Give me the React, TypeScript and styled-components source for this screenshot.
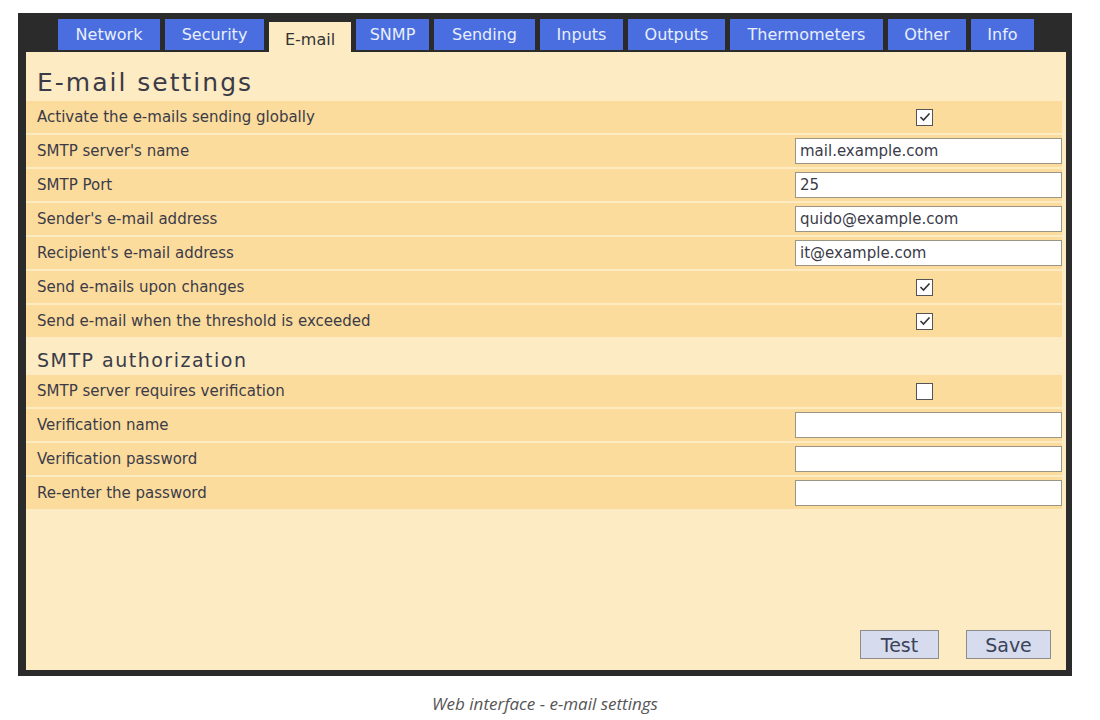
import React from "react";
import styled, { createGlobalStyle } from "styled-components";

const Global = createGlobalStyle`
  body { margin: 0; background: #fff; font-family: "DejaVu Sans", sans-serif; }
`;

const Page = styled.div`
  width: 1100px;
  height: 720px;
  padding: 13px 0 0 18px;
  box-sizing: border-box;
`;

const Frame = styled.div`
  width: 1054px;
  height: 663px;
  background: #2b2b2b;
  padding: 0 6px 6px 8px;
  box-sizing: border-box;
  display: flex;
  flex-direction: column;
`;

const TabBar = styled.div`
  display: flex;
  align-items: flex-end;
  gap: 5px;
  height: 39px;
  padding-left: 32px;
`;

const Tab = styled.div<{ $active?: boolean; $w: number }>`
  width: ${(p) => p.$w}px;
  height: ${(p) => (p.$active ? 30 : 31)}px;
  margin-bottom: ${(p) => (p.$active ? 0 : 2)}px;
  background: ${(p) => (p.$active ? "#fdebc3" : "#4a6ee0")};
  color: ${(p) => (p.$active ? "#333" : "#e8eefc")};
  font-size: 16px;
  display: flex;
  align-items: ${(p) => (p.$active ? "flex-end" : "center")};
  padding-bottom: ${(p) => (p.$active ? 3 : 0)}px;
  box-sizing: border-box;
  justify-content: center;
`;

const Panel = styled.div`
  flex: 1;
  background: #fdebc3;
  padding: 0 4px 0 0;
  display: flex;
  flex-direction: column;
  color: #3b3b48;
`;

const Heading = styled.h1<{ $small?: boolean }>`
  margin: 0;
  font-weight: normal;
  font-size: ${(p) => (p.$small ? 19 : 25)}px;
  letter-spacing: ${(p) => (p.$small ? 1.5 : 2)}px;
  height: ${(p) => (p.$small ? 36 : 49)}px;
  display: flex;
  align-items: flex-end;
  padding: 0 0 4px 11px;
  box-sizing: border-box;
`;

const Row = styled.div`
  height: 32px;
  margin-bottom: 2px;
  background: #fbdc9c;
  display: flex;
  align-items: center;
  font-size: 15px;
  padding-left: 11px;
`;

const Label = styled.div`
  flex: 1;
`;

const Control = styled.div`
  width: 267px;
  display: flex;
  justify-content: center;
  align-items: center;
`;

const TextInput = styled.div`
  width: 100%;
  height: 26px;
  background: #fff;
  border: 1px solid #9a9686;
  box-sizing: border-box;
  font-size: 15px;
  padding-left: 4px;
  display: flex;
  align-items: center;
`;

const Check = styled.div`
  width: 15px;
  height: 15px;
  margin-right: 8px;
  border: 1px solid #555;
  background: #fff;
  display: flex;
  align-items: center;
  justify-content: center;
`;

const Footer = styled.div`
  margin-top: auto;
  display: flex;
  justify-content: flex-end;
  gap: 27px;
  padding: 0 11px 11px 0;
`;

const Button = styled.div<{ $w: number }>`
  width: ${(p) => p.$w}px;
  height: 29px;
  background: #d6dcee;
  border: 1px solid #8c8c8c;
  box-sizing: border-box;
  font-size: 19px;
  color: #3b4358;
  display: flex;
  align-items: center;
  justify-content: center;
`;

const Caption = styled.div`
  width: 1054px;
  text-align: center;
  font-family: "Open Sans", sans-serif;
  font-style: italic;
  font-size: 17px;
  color: #555;
  margin-top: 16px;
`;

const tabs: [string, number][] = [
  ["Network", 102], ["Security", 99], ["E-mail", 82], ["SNMP", 73], ["Sending", 101],
  ["Inputs", 83], ["Outputs", 97], ["Thermometers", 153], ["Other", 78], ["Info", 63],
];

type Field = { label: string; check?: boolean; value?: string };

const main: Field[] = [
  { label: "Activate the e-mails sending globally", check: true },
  { label: "SMTP server's name", value: "mail.example.com" },
  { label: "SMTP Port", value: "25" },
  { label: "Sender's e-mail address", value: "quido@example.com" },
  { label: "Recipient's e-mail address", value: "it@example.com" },
  { label: "Send e-mails upon changes", check: true },
  { label: "Send e-mail when the threshold is exceeded", check: true },
];

const auth: Field[] = [
  { label: "SMTP server requires verification", check: false },
  { label: "Verification name", value: "" },
  { label: "Verification password", value: "" },
  { label: "Re-enter the password", value: "" },
];

function FieldRow({ f }: { f: Field }) {
  return (
    <Row>
      <Label>{f.label}</Label>
      <Control>
        {f.check !== undefined ? (
          <Check>
            {f.check && (
              <svg width="12" height="10" viewBox="0 0 12 10">
                <path d="M1.5 5 L4.5 8 L10.5 1.5" stroke="#333" strokeWidth="1.6" fill="none" />
              </svg>
            )}
          </Check>
        ) : (
          <TextInput>{f.value}</TextInput>
        )}
      </Control>
    </Row>
  );
}

export default function App() {
  return (
    <Page>
      <Global />
      <Frame>
        <TabBar>
          {tabs.map(([t, w]) => (
            <Tab key={t} $w={w} $active={t === "E-mail"}>{t}</Tab>
          ))}
        </TabBar>
        <Panel>
          <Heading>E-mail settings</Heading>
          {main.map((f) => <FieldRow key={f.label} f={f} />)}
          <Heading $small>SMTP authorization</Heading>
          {auth.map((f) => <FieldRow key={f.label} f={f} />)}
          <Footer>
            <Button $w={79}>Test</Button>
            <Button $w={85}>Save</Button>
          </Footer>
        </Panel>
      </Frame>
      <Caption>Web interface - e-mail settings</Caption>
    </Page>
  );
}
